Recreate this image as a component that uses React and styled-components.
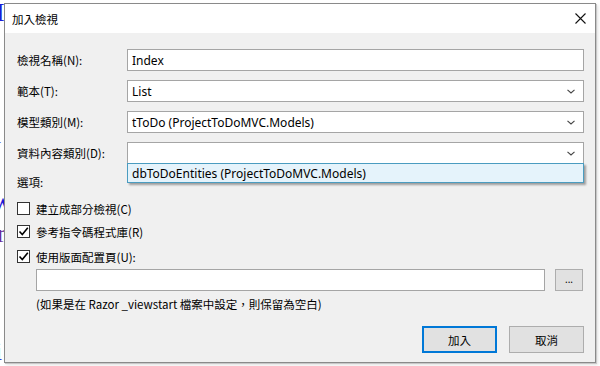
import React from "react"
import styled, { createGlobalStyle } from "styled-components"

const Global = createGlobalStyle`
html, body { margin: 0; padding: 0; background: #fff; }
#root { width: 600px; height: 366px; overflow: hidden; position: relative; }
`

const ui = `"Noto Sans", "Noto Sans CJK TC", sans-serif`
const cjk = `"Noto Sans CJK TC", "Noto Sans", sans-serif`

const Backdrop = styled.div`
width: 600px;
height: 366px;
font-family: "Liberation Serif", serif;
color: #1a1ad8;
font-size: 26px;
line-height: 1;
`
const BackLine = styled.div`
margin-left: ${p => p.left}px;
padding-top: ${p => p.top}px;
color: ${p => p.color || "#1a1ad8"};
white-space: nowrap;
`

const Dialog = styled.div`
position: absolute;
left: 4px;
top: 3px;
width: 590px;
height: 358px;
background: #f0f0f0;
border: 1px solid #8a8a8a;
box-shadow: 1px 1px 0 #c8c8c8, 2px 2px 3px rgba(0,0,0,0.12);
display: flex;
flex-direction: column;
font-family: ${cjk};
font-size: 11.5px;
color: #000;
`
const TitleBar = styled.div`
height: 29px;
background: #fff;
display: flex;
align-items: center;
justify-content: space-between;
padding: 0 9px 0 7px;
`
const Close = styled.svg`
width: 11px;
height: 11px;
`
const Body = styled.div`
flex: 1;
padding: 16px 11px 0 12px;
display: flex;
flex-direction: column;
`
const Row = styled.div`
display: grid;
grid-template-columns: 110px 1fr;
align-items: center;
height: 22px;
margin-bottom: ${p => p.mb ?? 9}px;
position: relative;
`
const Label = styled.span`
font-family: ${cjk};
font-size: 11.5px;
`
const Field = styled.div`
height: 22px;
box-sizing: border-box;
border: 1px solid #a5a5a5;
background: #fff;
display: flex;
align-items: center;
justify-content: space-between;
padding: 0 8px 0 4px;
font-family: ${ui};
font-size: 12px;
`
const Chevron = styled.svg`
width: 8px;
height: 5px;
`
const Popup = styled.div`
position: absolute;
left: 110px;
right: 0;
top: 21px;
height: 20px;
box-sizing: border-box;
border: 1px solid #4a9cc0;
background: #e5f3fb;
box-shadow: 2px 2px 2px rgba(0,0,0,0.35);
display: flex;
align-items: center;
padding-left: 4px;
font-family: ${ui};
font-size: 12px;
z-index: 2;
`
const Section = styled.div`
height: 14px;
display: flex;
align-items: center;
margin: 11px 0 13px;
`
const Check = styled.label`
display: flex;
align-items: center;
gap: 6px;
height: 13px;
margin-bottom: ${p => p.mb}px;
`
const Box = styled.span`
width: 13px;
height: 13px;
box-sizing: border-box;
border: 1px solid #333;
background: #fff;
display: flex;
align-items: center;
justify-content: center;
`
const PathRow = styled.div`
display: flex;
align-items: center;
gap: 10px;
margin: 6px 0 0 19px;
`
const PathInput = styled.div`
width: 509px;
height: 22px;
box-sizing: border-box;
border: 1px solid #a5a5a5;
background: #fff;
`
const Browse = styled.div`
width: 28px;
height: 22px;
box-sizing: border-box;
border: 1px solid #adadad;
background: #e1e1e1;
display: flex;
align-items: center;
justify-content: center;
font-family: ${ui};
font-size: 10px;
padding-bottom: 3px;
`
const Note = styled.div`
margin: 5px 0 0 19px;
font-family: ${cjk};
font-size: 11.5px;
`
const Footer = styled.div`
display: flex;
justify-content: flex-end;
gap: 12px;
margin-top: 14px;
`
const Button = styled.div`
width: 75px;
height: 27px;
box-sizing: border-box;
border: 1px solid ${p => p.primary ? "#0078d7" : "#adadad"};
box-shadow: ${p => p.primary ? "inset 0 0 0 1px #0078d7" : "none"};
background: #e1e1e1;
display: flex;
align-items: center;
justify-content: center;
font-family: ${cjk};
font-size: 11.5px;
`

const ChevronIcon = () => (
  <Chevron viewBox="0 0 8 5">
    <path d="M0.5 0.8 L4 4 L7.5 0.8" fill="none" stroke="#444" strokeWidth="1.1" />
  </Chevron>
)

const Tick = () => (
  <svg width="11" height="11" viewBox="0 0 11 11">
    <path d="M1.5 5.5 L4.3 8.5 L9.8 1.8" fill="none" stroke="#000" strokeWidth="1.6" />
  </svg>
)

const Select = ({ value }) => (
  <Field>
    <span>{value}</span>
    <ChevronIcon />
  </Field>
)

export default function App() {
  return (
    <>
      <Global />
      <Backdrop>
        <BackLine left={-4} top={0}>I</BackLine>
        <BackLine left={-6} top={96}>i</BackLine>
        <BackLine left={-10} top={45}>W</BackLine>
        <BackLine left={-3} top={2} color="#6a2a9a">r</BackLine>
        <BackLine left={-5} top={92}>i</BackLine>
      </Backdrop>
      <Dialog>
        <TitleBar>
          <span>加入檢視</span>
          <Close viewBox="0 0 11 11">
            <path d="M0.5 0.5 L10.5 10.5 M10.5 0.5 L0.5 10.5" stroke="#111" strokeWidth="1.1" />
          </Close>
        </TitleBar>
        <Body>
          <Row>
            <Label>檢視名稱(N):</Label>
            <Field>Index</Field>
          </Row>
          <Row>
            <Label>範本(T):</Label>
            <Select value="List" />
          </Row>
          <Row>
            <Label>模型類別(M):</Label>
            <Select value="tToDo (ProjectToDoMVC.Models)" />
          </Row>
          <Row mb={0}>
            <Label>資料內容類別(D):</Label>
            <Select value="" />
            <Popup>dbToDoEntities (ProjectToDoMVC.Models)</Popup>
          </Row>
          <Section>選項:</Section>
          <Check mb={10}>
            <Box />
            <span>建立成部分檢視(C)</span>
          </Check>
          <Check mb={12}>
            <Box><Tick /></Box>
            <span>參考指令碼程式庫(R)</span>
          </Check>
          <Check mb={0}>
            <Box><Tick /></Box>
            <span>使用版面配置頁(U):</span>
          </Check>
          <PathRow>
            <PathInput />
            <Browse>...</Browse>
          </PathRow>
          <Note>(如果是在 Razor _viewstart 檔案中設定，則保留為空白)</Note>
          <Footer>
            <Button primary>加入</Button>
            <Button>取消</Button>
          </Footer>
        </Body>
      </Dialog>
    </>
  )
}
